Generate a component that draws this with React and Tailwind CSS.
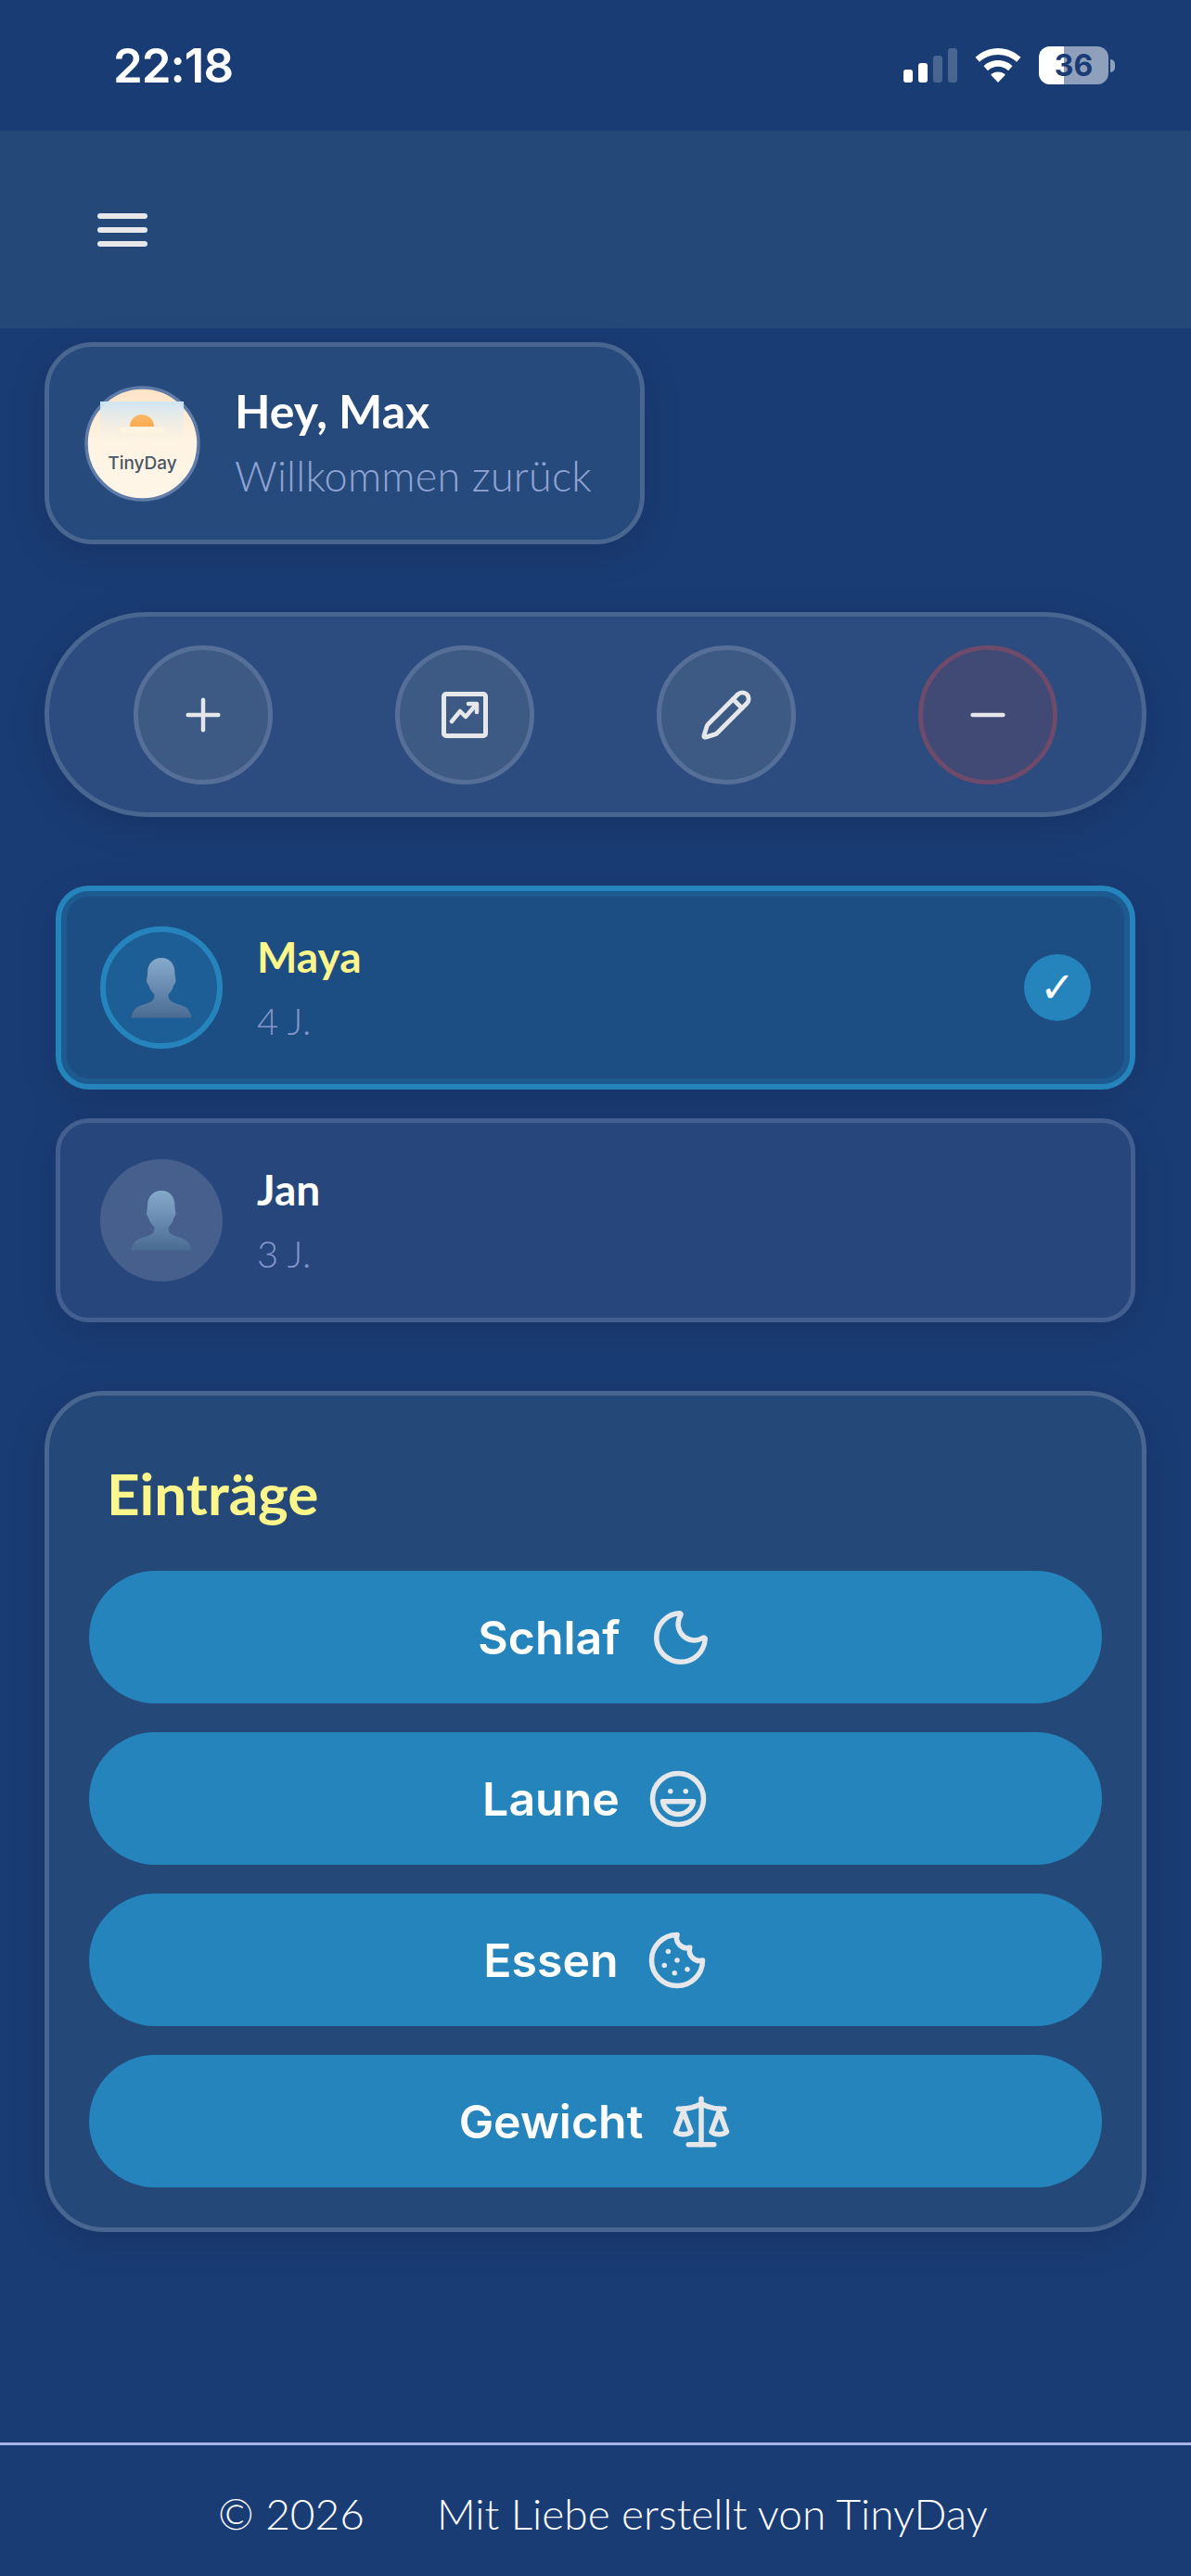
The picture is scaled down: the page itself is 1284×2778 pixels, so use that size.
import React from "react";
import { Plus, Minus, Pencil, Moon, Laugh, Cookie, Scale } from "lucide-react";

const display = "font-['Lato','Noto_Sans',sans-serif]";
const inter = "font-['Inter','Noto_Sans',sans-serif]";

function Person() {
  return (
    <svg width="66" height="66" viewBox="0 0 66 66">
      <defs>
        <linearGradient id="pg" x1="0" y1="0" x2="0" y2="1">
          <stop offset="0" stopColor="#86aacb" />
          <stop offset="1" stopColor="#4a6b93" />
        </linearGradient>
      </defs>
      <path
        d="M33 1c-9.5 0-15 7-15 16 0 3-.6 6-1 8-.2 2 1 4 2 5 1 4 3.500 8 6.500 10.500 0 4-1 6-4 8-4 2.500-11 3-15 6C4 56 1.500 60 .5 65.500h65C64.500 60 62 56 59.500 54.500c-4-3-11-3.500-15-6-3-2-4-4-4-8C43.500 38 45.500 34 46.500 30c1-1 2.200-3 2-5-.4-2-1-5-1-8C47.500 8 42.500 1 33 1z"
        fill="url(#pg)"
      />
    </svg>
  );
}

function ChartIcon() {
  return (
    <svg width="50" height="50" viewBox="0 0 50 50" fill="none" stroke="#e5e7eb" strokeLinecap="round" strokeLinejoin="round">
      <rect x="2.500" y="2.500" width="45" height="45" rx="2.500" strokeWidth="5" />
      <path d="M11 32l9-11 6 6 11-13" strokeWidth="4.500" />
      <path d="M29 13h9v9" strokeWidth="4.500" />
    </svg>
  );
}

function Logo() {
  return (
    <svg width="125" height="125" viewBox="0 0 125 125" className="block shrink-0">
      <defs>
        <linearGradient id="lg" x1="0" y1="0" x2="0" y2="1">
          <stop offset="0" stopColor="#ffe3c6" />
          <stop offset="0.5" stopColor="#fff4e3" />
          <stop offset="1" stopColor="#fff6e9" />
        </linearGradient>
        <linearGradient id="sky" x1="0" y1="0" x2="0" y2="1">
          <stop offset="0" stopColor="#cfe6f4" />
          <stop offset="1" stopColor="#fff4e3" stopOpacity="0.2" />
        </linearGradient>
        <linearGradient id="sun" x1="0" y1="0" x2="0" y2="1">
          <stop offset="0" stopColor="#fbb968" />
          <stop offset="1" stopColor="#fba94f" />
        </linearGradient>
      </defs>
      <circle cx="62.500" cy="62.500" r="60.500" fill="url(#lg)" stroke="#5f7ca8" strokeWidth="3.500" />
      <rect x="17" y="17" width="90" height="48" fill="url(#sky)" />
      <path d="M49 44a13 13 0 0 1 26 0z" fill="url(#sun)" />
      <rect x="38" y="45" width="48" height="6" rx="1" fill="#fff4e0" />
      <rect x="59" y="50" width="6" height="13" fill="#fff4e0" opacity="0.7" />
      <text x="62.500" y="90" textAnchor="middle" fontFamily="Inter, sans-serif" fontWeight="500" fontSize="19" fill="#4b5563">
        TinyDay
      </text>
    </svg>
  );
}

function Wifi() {
  return (
    <svg width="50" height="37" viewBox="0 0 50 37" fill="#fff">
      <path d="M25 0C15.500 0 7 3.800 0.500 9.800l4.500 5C10.200 10 17.200 7 25 7s14.800 3 20 7.800l4.500-5C43 3.800 34.500 0 25 0z" />
      <path d="M25 13c-6 0-11.500 2.300-15.500 6.200l4.500 5c2.900-2.800 6.800-4.400 11-4.400s8.100 1.600 11 4.400l4.500-5C36.500 15.300 31 13 25 13z" />
      <path d="M25 25.500c-3 0-5.800 1.200-7.800 3.200L25 37l7.800-8.300c-2-2-4.800-3.200-7.800-3.200z" />
    </svg>
  );
}

function StatusBar() {
  return (
    <div className="h-[141px] flex items-center justify-between pl-[122px] pr-[82px]">
      <span className={`${inter} text-[51px] font-semibold text-white leading-none tracking-[-1px]`}>22:18</span>
      <div className="flex items-center gap-[19px]">
        <div className="flex items-end gap-[6px] h-[37px]">
          <div className="w-[10px] h-[14px] rounded-[3px] bg-white" />
          <div className="w-[10px] h-[21px] rounded-[3px] bg-white" />
          <div className="w-[10px] h-[29px] rounded-[3px] bg-[#486690]" />
          <div className="w-[10px] h-[37px] rounded-[3px] bg-[#486690]" />
        </div>
        <Wifi />
        <div className="flex items-center gap-[2px]">
          <div className="relative w-[75px] h-[41px] rounded-[12px] overflow-hidden bg-[#8fa0bc] flex items-center justify-center">
            <div className="absolute left-0 top-0 bottom-0 w-[27px] bg-white" />
            <span className={`${inter} relative text-[32px] font-bold text-[#1a3c75] leading-none`}>36</span>
          </div>
          <div className="w-[5px] h-[14px] rounded-r-full bg-[#8fa0bc]" />
        </div>
      </div>
    </div>
  );
}

function Header() {
  return (
    <div className="h-[213px] bg-[#244878] flex items-center pl-[105px]">
      <div className="flex flex-col gap-[9px] w-[54px]">
        <div className="h-[6px] rounded-full bg-[#e5e7eb]" />
        <div className="h-[6px] rounded-full bg-[#e5e7eb]" />
        <div className="h-[6px] rounded-full bg-[#e5e7eb]" />
      </div>
    </div>
  );
}

function Welcome() {
  return (
    <div className="ml-[48px] mt-[15px] w-[647px] h-[218px] rounded-[52px] border-[5px] border-[#486690] bg-[#264a7c] shadow-[0_10px_40px_rgba(0,0,0,0.14)] flex items-center pl-[38px] gap-[37px]">
      <Logo />
      <div className={`${display} flex flex-col`}>
        <span className="text-[50px] font-bold text-white leading-[62px]">Hey, Max</span>
        <span className="text-[45px] font-light text-[#8fa3d4] leading-[62px] mt-[8px] tracking-[0.2px]">Willkommen zurück</span>
      </div>
    </div>
  );
}

function ActionButton({ children, danger }) {
  return (
    <div
      className={
        danger
          ? "w-[150px] h-[150px] rounded-full border-[5px] border-[#6e4a6b] bg-[#404a75] flex items-center justify-center"
          : "w-[150px] h-[150px] rounded-full border-[5px] border-[#566f98] bg-[#3d5a85] flex items-center justify-center"
      }
    >
      {children}
    </div>
  );
}

function Actions() {
  return (
    <div className="mx-[48px] mt-[73px] h-[221px] rounded-full border-[5px] border-[#486690] bg-[#2c4c7f] shadow-[0_10px_40px_rgba(0,0,0,0.14)] flex items-center justify-between px-[91px]">
      <ActionButton>
        <Plus size={56} color="#e5e7eb" strokeWidth={1.9} />
      </ActionButton>
      <ActionButton>
        <ChartIcon />
      </ActionButton>
      <ActionButton>
        <Pencil size={58} color="#e5e7eb" strokeWidth={2} />
      </ActionButton>
      <ActionButton danger>
        <Minus size={56} color="#e5e7eb" strokeWidth={2} />
      </ActionButton>
    </div>
  );
}

function Profile({ name, age, active }) {
  return (
    <div
      className={
        active
          ? "mx-[60px] h-[220px] rounded-[36px] border-[6px] border-[#2484bb] bg-[#1c4e83] shadow-[inset_0_0_0_6px_#1d5a90,0_10px_40px_rgba(0,0,0,0.12)] flex items-center pl-[42px] pr-[42px]"
          : "mx-[60px] h-[220px] rounded-[36px] border-[5px] border-[#435f90] bg-[#26467c] shadow-[0_10px_40px_rgba(0,0,0,0.12)] flex items-center pl-[43px] pr-[43px]"
      }
    >
      <div
        className={
          active
            ? "w-[132px] h-[132px] rounded-full border-[6px] border-[#2484bb] bg-[#1e5e96] flex items-center justify-center"
            : "w-[132px] h-[132px] rounded-full bg-[#465f8d] flex items-center justify-center"
        }
      >
        <Person />
      </div>
      <div className={`${display} flex flex-col ml-[37px] flex-1`}>
        <span className={active ? "text-[46px] font-bold text-[#fdf68b] leading-[56px]" : "text-[46px] font-bold text-white leading-[56px]"}>{name}</span>
        <span className="text-[40px] font-light text-[#8397cc] leading-[50px] mt-[16px]">{age}</span>
      </div>
      {active && (
        <div className="w-[72px] h-[72px] rounded-full bg-[#2484bb] flex items-center justify-center">
          <span className="font-['DejaVu_Sans',sans-serif] text-[46px] font-bold text-white leading-none">✓</span>
        </div>
      )}
    </div>
  );
}

function Entry({ label, children }) {
  return (
    <div className="h-[143px] rounded-full bg-[#2484bb] flex items-center justify-center gap-[30px]">
      <span className={`${inter} text-[50px] font-semibold text-white leading-none`}>{label}</span>
      {children}
    </div>
  );
}

function Entries() {
  return (
    <div className="mx-[48px] mt-[74px] h-[907px] rounded-[64px] border-[5px] border-[#486690] bg-[#244878] shadow-[0_10px_40px_rgba(0,0,0,0.14)] px-[43px] pt-[67px]">
      <h2 className={`${display} text-[62px] font-bold text-[#fdf68b] leading-[76px] pl-[19px]`}>Einträge</h2>
      <div className="flex flex-col gap-[31px] mt-[46px]">
        <Entry label="Schlaf">
          <Moon size={70} color="#e5e7eb" strokeWidth={1.9} />
        </Entry>
        <Entry label="Laune">
          <Laugh size={66} color="#e5e7eb" strokeWidth={2} />
        </Entry>
        <Entry label="Essen">
          <Cookie size={66} color="#e5e7eb" strokeWidth={2} />
        </Entry>
        <Entry label="Gewicht">
          <Scale size={66} color="#e5e7eb" strokeWidth={2} />
        </Entry>
      </div>
    </div>
  );
}

function Footer() {
  return (
    <div className="mt-auto h-[144px] border-t-[3px] border-[#a5b4e4] flex items-center pl-[235px] pt-[6px]">
      <div className={`${display} flex items-center text-[46px] font-light text-white leading-none`}>
        <span>© 2026</span>
        <span className="ml-[78px]">Mit Liebe erstellt von TinyDay</span>
      </div>
    </div>
  );
}

export default function App() {
  return (
    <div className="w-[1284px] h-[2778px] bg-[#1a3c75] flex flex-col overflow-hidden">
      <StatusBar />
      <Header />
      <Welcome />
      <Actions />
      <div className="flex flex-col gap-[31px] mt-[74px]">
        <Profile name="Maya" age="4 J." active />
        <Profile name="Jan" age="3 J." />
      </div>
      <Entries />
      <Footer />
    </div>
  );
}
